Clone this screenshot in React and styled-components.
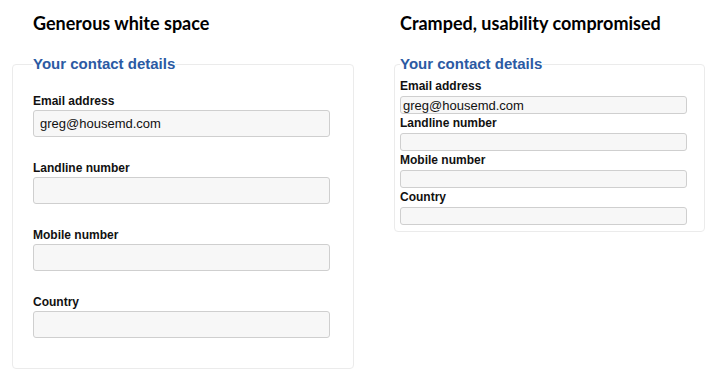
import React from "react";
import styled, { createGlobalStyle } from "styled-components";

const Global = createGlobalStyle`
  body {
    margin: 0;
    background: #fff;
    font-family: "Liberation Sans", Arial, sans-serif;
  }
`;

const Page = styled.div`
  display: flex;
  gap: 40px;
  padding: 0 0 0 12px;
`;

const Column = styled.div`
  width: ${(p) => p.$width}px;
  display: flex;
  flex-direction: column;
`;

const Titulo = styled.h2`
  margin: 11px 0 0 ${(p) => p.$indent}px;
  height: 30px;
  font-family: "Lato", "Open Sans", sans-serif;
  font-weight: 700;
  font-size: 18px;
  line-height: 24px;
  color: #000;
`;

const Caja = styled.fieldset`
  margin: 14px 0 0;
  padding: 0 ${(p) => p.$pad}px ${(p) => p.$bottom}px;
  border: 1px solid #ebebeb;
  border-radius: 4px;
  min-width: 0;
`;

const Leyenda = styled.legend`
  padding: 0;
  font-size: 15px;
  line-height: 18px;
  font-weight: 700;
  color: #2b5aa3;
`;

const Campos = styled.div`
  padding-top: ${(p) => p.$top}px;
  display: flex;
  flex-direction: column;
`;

const Etiqueta = styled.label`
  display: block;
  font-size: 12px;
  font-weight: 700;
  color: #111;
  line-height: ${(p) => (p.$cramped ? 16 : 14)}px;
  margin-bottom: 2px;
`;

const Entrada = styled.input`
  display: block;
  box-sizing: border-box;
  width: ${(p) => (p.$cramped ? 287 : 297)}px;
  height: ${(p) => (p.$cramped ? 18 : 27)}px;
  margin: 0 0 ${(p) => (p.$cramped ? 1 : 24)}px;
  padding: 0 ${(p) => (p.$cramped ? 2 : 6)}px;
  border: 1px solid #cfcfcf;
  border-radius: 3px;
  background: #f7f7f7;
  font-family: "Liberation Sans", Arial, sans-serif;
  font-size: 13px;
  color: #111;
  outline: none;

  &:last-child {
    margin-bottom: 0;
  }
`;

const campos = [
  { label: "Email address", value: "greg@housemd.com" },
  { label: "Landline number", value: "" },
  { label: "Mobile number", value: "" },
  { label: "Country", value: "" },
];

const Formulario = ({ cramped }) => (
  <Caja $pad={cramped ? 5 : 20} $bottom={cramped ? 6 : 30}>
    <Leyenda>Your contact details</Leyenda>
    <Campos $top={cramped ? 5 : 21}>
      {campos.map((c) => (
        <React.Fragment key={c.label}>
          <Etiqueta $cramped={cramped}>{c.label}</Etiqueta>
          <Entrada $cramped={cramped} defaultValue={c.value} />
        </React.Fragment>
      ))}
    </Campos>
  </Caja>
);

const App = () => {
  return (
    <>
      <Global />
      <Page>
        <Column $width={342}>
          <Titulo $indent={21}>Generous white space</Titulo>
          <Formulario />
        </Column>
        <Column $width={311}>
          <Titulo $indent={6}>Cramped, usability compromised</Titulo>
          <Formulario cramped />
        </Column>
      </Page>
    </>
  );
};

export default App;
